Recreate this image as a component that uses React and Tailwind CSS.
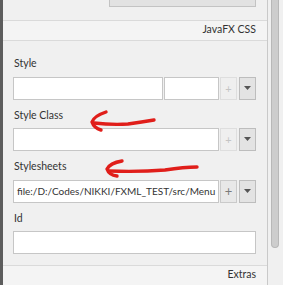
function Field({ className = "", children }) {
  return (
    <div className={`h-[23px] bg-white border border-[#c6c6c6] flex items-center overflow-hidden ${className}`}>
      {children}
    </div>
  );
}

function PlusButton({ enabled }) {
  return enabled ? (
    <div className="shrink-0 w-[17px] h-[23px] ml-px bg-[#e8e8e8] border border-[#cacaca] flex items-center justify-center text-[#7a7a7a] text-[13px] leading-none">
      +
    </div>
  ) : (
    <div className="shrink-0 w-[17px] h-[23px] ml-px bg-[#efefef] border border-[#dedede] flex items-center justify-center text-[#c4c4c4] text-[11px] leading-none">
      +
    </div>
  );
}

function DropButton() {
  return (
    <div className="shrink-0 w-[17px] h-[23px] ml-[2px] bg-[#e3e3e3] border border-[#bdbdbd] flex items-center justify-center">
      <svg width="7" height="4" viewBox="0 0 7 4">
        <path d="M0 0 L7 0 L3.5 4 Z" fill="#555" />
      </svg>
    </div>
  );
}

function Label({ children, className = "" }) {
  return <div className={`h-[16px] leading-[16px] pl-px ${className}`}>{children}</div>;
}

export default function App() {
  return (
    <div className="relative w-[283px] h-[285px] overflow-hidden flex bg-[#f0f0f0] text-[#333] text-[10.5px] font-['Lato',sans-serif]">
      <div className="shrink-0 w-[3px] bg-[#5d5d5d]" />

      <div className="flex-1 min-w-0 flex flex-col border-r border-[#c9c9c9]">
        {/* clipped Effect row */}
        <div className="flex items-end h-[24px] -mt-[17px] pl-[11px] pr-[11px]">
          <div className="flex-1 leading-[16px] pb-[5px]">Effect</div>
          <div className="w-[147px] h-[24px] bg-[#e2e2e2] border border-[#c3c3c3]" />
        </div>

        <div className="mt-[13px] border-t border-b border-[#dadada] bg-[#f4f4f4] h-[24px] flex items-center justify-end pr-[11px] text-[10.5px]">
          JavaFX CSS
        </div>

        <div className="flex flex-col pl-[10px] pr-[11px] pt-[14px]">
          <Label>Style</Label>
          <div className="flex mt-[6px]">
            <Field className="w-[150px]" />
            <Field className="w-[55px] ml-px bg-[#fbfbfb]" />
            <PlusButton />
            <DropButton />
          </div>

          <Label className="mt-[7px]">Style Class</Label>
          <div className="flex mt-[5px]">
            <Field className="flex-1" />
            <PlusButton />
            <DropButton />
          </div>

          <Label className="mt-[7px]">Stylesheets</Label>
          <div className="flex mt-[6px]">
            <Field className="flex-1 min-w-0 pl-[3px] text-[10px]">
              <span className="whitespace-nowrap">file:/D:/Codes/NIKKI/FXML_TEST/src/Menu</span>
            </Field>
            <PlusButton enabled />
            <DropButton />
          </div>

          <Label className="mt-[7px]">Id</Label>
          <div className="flex mt-[5px]">
            <Field className="flex-1" />
          </div>
        </div>

        <div className="mt-[11px] border-t border-[#dadada] bg-[#f4f4f4] h-[24px] flex items-center justify-end pr-[11px]">
          Extras
        </div>
      </div>

      <div className="shrink-0 w-[15px] pl-[3px] pr-[4px]">
        <div className="w-[8px] h-[248px] bg-[#cdcdcd] border border-[#b8b8b8] border-t-0 rounded-b-[4px]" />
      </div>

      <svg
        className="absolute inset-0 pointer-events-none"
        width="283"
        height="285"
        viewBox="0 0 283 285"
      >
        <g fill="none" stroke="#e01e1a" strokeWidth="3.4" strokeLinecap="round" strokeLinejoin="round">
          <path d="M106 112 Q94 116 92 122 Q94 128 101 130" />
          <path d="M94 123 Q112 125 128 124 Q142 122 154 120" />
          <path d="M122 161 Q110 163 107 169 Q109 175 117 176" />
          <path d="M109 171 Q140 172 165 170 Q184 167 197 167" />
        </g>
      </svg>
    </div>
  );
}
